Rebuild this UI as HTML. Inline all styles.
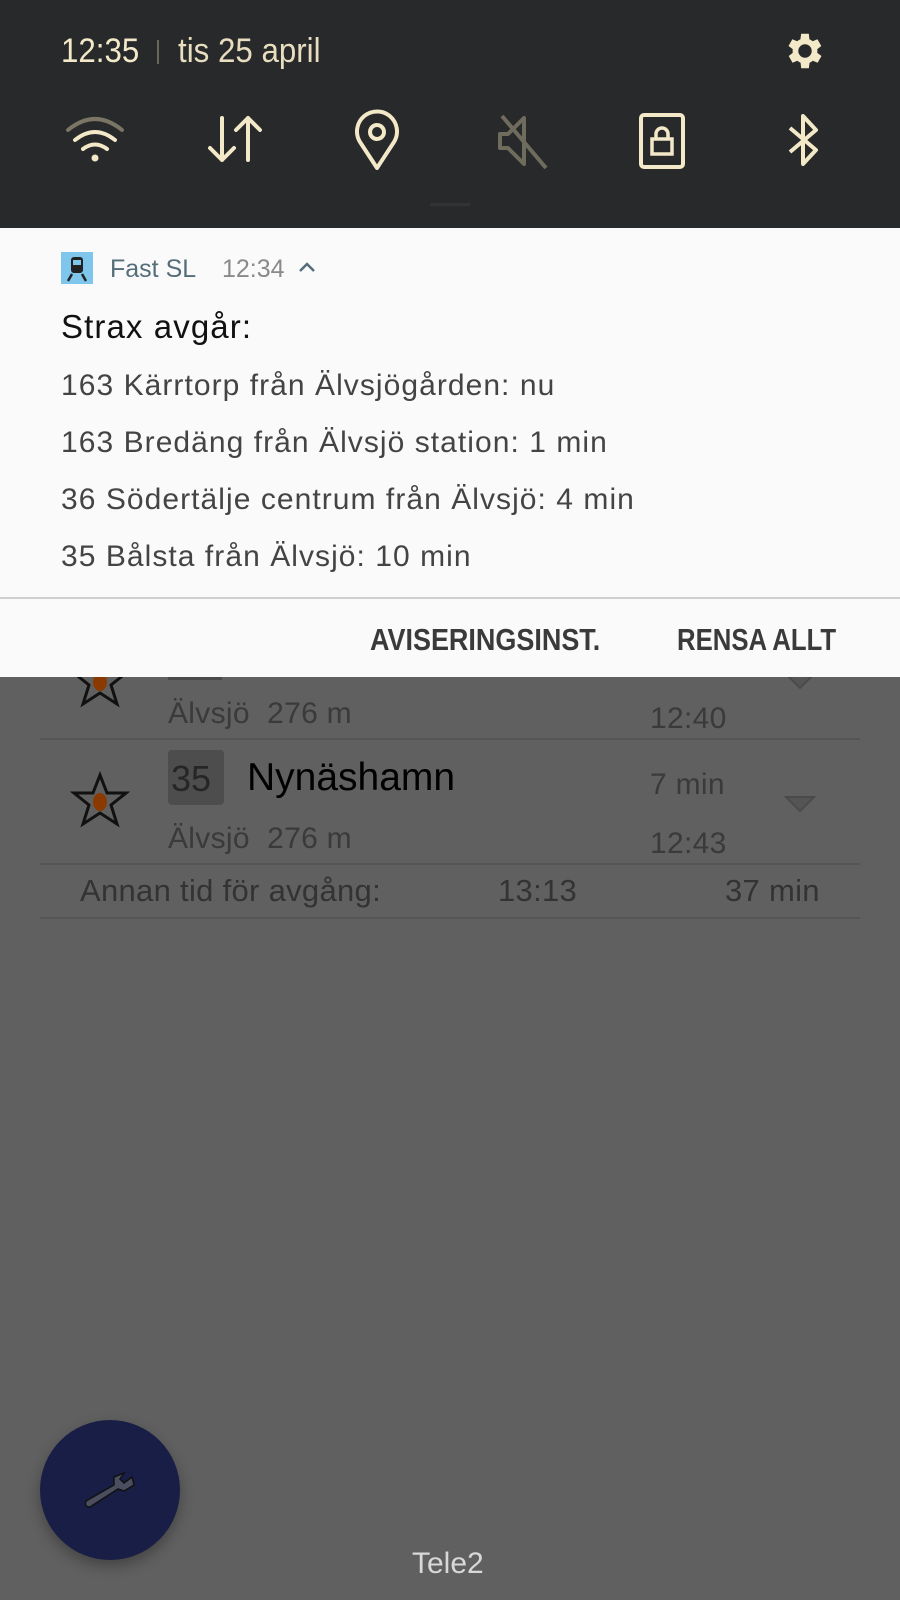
<!DOCTYPE html>
<html><head><meta charset="utf-8"><style>
*{margin:0;padding:0;box-sizing:border-box}
body{width:900px;height:1600px;background:#606060;position:relative;overflow:hidden;font-family:"Liberation Sans",sans-serif}
.a{position:absolute;white-space:nowrap}
.hd{transform-origin:0 0;transform:scaleX(.92)}
.bt{transform-origin:0 0;transform:scaleX(.87)}
.ap{letter-spacing:.3px}
</style></head><body>
<!-- background app content -->
<svg class="a" style="left:70px;top:650px" width="60" height="60" viewBox="0 0 60 60"><path d="M30 5 L37 23 L56 23 L41 35 L47 54 L30 43 L13 54 L19 35 L4 23 L23 23Z" fill="none" stroke="#111" stroke-width="3"/><ellipse cx="30" cy="32" rx="7" ry="9" fill="#8a3a00"/></svg>
<div class="a" style="left:168px;top:677px;width:54px;height:3px;background:#4a4a4a"></div>
<div class="a ap" style="left:168px;top:697px;font-size:30px;color:#3a3a3a">Älvsjö&nbsp;&nbsp;276 m</div>
<div class="a ap" style="left:650px;top:702px;font-size:30px;color:#3a3a3a">12:40</div>
<svg class="a" style="left:782px;top:670px" width="36" height="24"><path d="M4 4 L32 4 L18 18Z" fill="#555" stroke="#4a4a4a" stroke-width="2"/></svg>
<div class="a" style="left:40px;top:738px;width:820px;height:2px;background:#555"></div>
<svg class="a" style="left:70px;top:770px" width="60" height="60" viewBox="0 0 60 60"><path d="M30 5 L37 23 L56 23 L41 35 L47 54 L30 43 L13 54 L19 35 L4 23 L23 23Z" fill="none" stroke="#111" stroke-width="3"/><ellipse cx="30" cy="32" rx="7" ry="9" fill="#8a3a00"/></svg>
<div class="a" style="left:168px;top:750px;width:56px;height:55px;background:#4d4d4d;border-radius:4px"></div>
<div class="a" style="left:171px;top:758px;font-size:36px;color:#262626">35</div>
<div class="a" style="left:247px;top:756px;font-size:39px;color:#000">Nynäshamn</div>
<div class="a ap" style="left:650px;top:768px;font-size:30px;color:#3a3a3a">7 min</div>
<svg class="a" style="left:782px;top:793px" width="36" height="24"><path d="M4 4 L32 4 L18 18Z" fill="#555" stroke="#4a4a4a" stroke-width="2"/></svg>
<div class="a ap" style="left:168px;top:822px;font-size:30px;color:#3a3a3a">Älvsjö&nbsp;&nbsp;276 m</div>
<div class="a ap" style="left:650px;top:827px;font-size:30px;color:#3a3a3a">12:43</div>
<div class="a" style="left:40px;top:863px;width:820px;height:2px;background:#555"></div>
<div class="a ap" style="left:80px;top:873px;font-size:31px;color:#333">Annan tid för avgång:</div>
<div class="a ap" style="left:498px;top:873px;font-size:31px;color:#333">13:13</div>
<div class="a ap" style="left:725px;top:873px;font-size:31px;color:#333">37 min</div>
<div class="a" style="left:40px;top:917px;width:820px;height:2px;background:#555"></div>
<div class="a" style="left:40px;top:1420px;width:140px;height:140px;border-radius:50%;background:#181e45;box-shadow:0 6px 14px rgba(0,0,0,.3)"></div>
<svg class="a" style="left:80px;top:1465px" width="60" height="50" viewBox="0 0 60 50"><path d="M6 36 L34 20 L34 12 L44 8 L40 14 L44 18 L52 12 L54 20 L44 26 L38 24 L10 42 Q4 42 6 36Z" fill="#4a4e5e" stroke="#111" stroke-width="1.5"/></svg>
<div class="a" style="left:412px;top:1547px;font-size:30px;color:#d8d8d8">Tele2</div>

<!-- dark header -->
<div class="a" style="left:0;top:0;width:900px;height:228px;background:#28292b"></div>
<div class="a hd" style="left:61px;top:32px;font-size:34px;color:#f3e8c8">12:35</div>
<div class="a" style="left:157px;top:40px;width:2px;height:24px;background:#6a665a"></div>
<div class="a hd" style="left:178px;top:32px;font-size:34px;color:#e8ddbe">tis 25 april</div>
<svg class="a" style="left:782px;top:28px" width="46" height="46" viewBox="0 0 24 24"><path fill="#f3e8c8" d="M19.4 13a7.5 7.5 0 000-2l2.1-1.6-2-3.5-2.5 1a7 7 0 00-1.7-1L15 3h-4l-.4 2.9a7 7 0 00-1.7 1l-2.5-1-2 3.5L6.6 11a7.5 7.5 0 000 2l-2.1 1.6 2 3.5 2.5-1a7 7 0 001.7 1L11 21h4l.4-2.9a7 7 0 001.7-1l2.5 1 2-3.5zM13 15.5a3.5 3.5 0 110-7 3.5 3.5 0 010 7z" transform="translate(-1 0)"/></svg>
<svg class="a" style="left:60px;top:112px" width="70" height="60" viewBox="0 0 70 60"><g fill="none" stroke-width="4" stroke-linecap="round"><path d="M8 18 Q35 -4 62 18" stroke="#7a7564"/><path d="M15 28 Q35 12 55 28" stroke="#f3e8c8"/><path d="M23 37 Q35 28 47 37" stroke="#f3e8c8"/></g><circle cx="35" cy="46" r="3.5" fill="#f3e8c8"/></svg>
<svg class="a" style="left:205px;top:112px" width="60" height="56" viewBox="0 0 60 56"><g fill="none" stroke="#f3e8c8" stroke-width="4" stroke-linecap="round" stroke-linejoin="round"><path d="M17 6 V48 M5 36 L17 48 L29 36"/><path d="M43 48 V6 M31 18 L43 6 L55 18"/></g></svg>
<svg class="a" style="left:352px;top:108px" width="50" height="64" viewBox="0 0 50 64"><path d="M25 60 L8 34 A20 20 0 1 1 42 34 Z" fill="none" stroke="#f3e8c8" stroke-width="4" stroke-linejoin="round"/><circle cx="25" cy="24" r="7" fill="none" stroke="#f3e8c8" stroke-width="4"/></svg>
<svg class="a" style="left:492px;top:112px" width="60" height="60" viewBox="0 0 60 60"><g fill="none" stroke="#6f6b5d" stroke-width="4" stroke-linejoin="round"><path d="M8 22 H16 L32 6 V52 L16 36 H8Z"/><path d="M10 4 L54 56"/></g></svg>
<svg class="a" style="left:638px;top:112px" width="50" height="58" viewBox="0 0 50 58"><rect x="3" y="3" width="42" height="52" rx="3" fill="none" stroke="#f3e8c8" stroke-width="4"/><rect x="14" y="27" width="20" height="15" fill="none" stroke="#f3e8c8" stroke-width="3.5"/><path d="M18 27 V22 A6 6 0 0 1 30 22 V27" fill="none" stroke="#f3e8c8" stroke-width="3.5"/></svg>
<svg class="a" style="left:782px;top:110px" width="44" height="62" viewBox="0 0 44 62"><path d="M8 18 L34 40 L21 54 V6 L34 20 L8 42" fill="none" stroke="#f3e8c8" stroke-width="4" stroke-linejoin="round"/></svg>
<div class="a" style="left:430px;top:203px;width:40px;height:3px;background:#333"></div>

<!-- notification card -->
<div class="a" style="left:0;top:228px;width:900px;height:449px;background:#fafafa"></div>
<div class="a" style="left:61px;top:252px;width:32px;height:32px;background:#7fc6ec"></div>
<svg class="a" style="left:64px;top:254px" width="26" height="28" viewBox="0 0 26 28"><rect x="7" y="3" width="12" height="16" rx="3" fill="#222"/><rect x="9" y="6" width="8" height="5" fill="#7fc6ec"/><path d="M8 20 L4 27 M18 20 L22 27" stroke="#222" stroke-width="2.5"/></svg>
<div class="a" style="left:110px;top:255px;font-size:25px;color:#546e7a">Fast SL</div>
<div class="a" style="left:222px;top:255px;font-size:25px;color:#8a8a8a">12:34</div>
<svg class="a" style="left:298px;top:260px" width="18" height="14"><path d="M2 11 L9 4 L16 11" fill="none" stroke="#546e7a" stroke-width="2.5"/></svg>
<div class="a" style="left:61px;top:308px;font-size:33px;letter-spacing:1.1px;color:#111">Strax avgår:</div>
<div class="a" style="left:61px;top:369px;font-size:30px;letter-spacing:1.05px;color:#444">163 Kärrtorp från Älvsjögården: nu</div>
<div class="a" style="left:61px;top:426px;font-size:30px;letter-spacing:1.05px;color:#444">163 Bredäng från Älvsjö station: 1 min</div>
<div class="a" style="left:61px;top:483px;font-size:30px;letter-spacing:1.05px;color:#444">36 Södertälje centrum från Älvsjö: 4 min</div>
<div class="a" style="left:61px;top:540px;font-size:30px;letter-spacing:1.05px;color:#444">35 Bålsta från Älvsjö: 10 min</div>
<div class="a" style="left:0;top:597px;width:900px;height:2px;background:#cfcfcf"></div>
<div class="a bt" style="left:370px;top:622px;font-size:31px;font-weight:bold;color:#3a3a3a">AVISERINGSINST.</div>
<div class="a bt" style="left:677px;top:622px;font-size:31px;font-weight:bold;color:#3a3a3a;transform:scaleX(.83)">RENSA ALLT</div>
</body></html>
